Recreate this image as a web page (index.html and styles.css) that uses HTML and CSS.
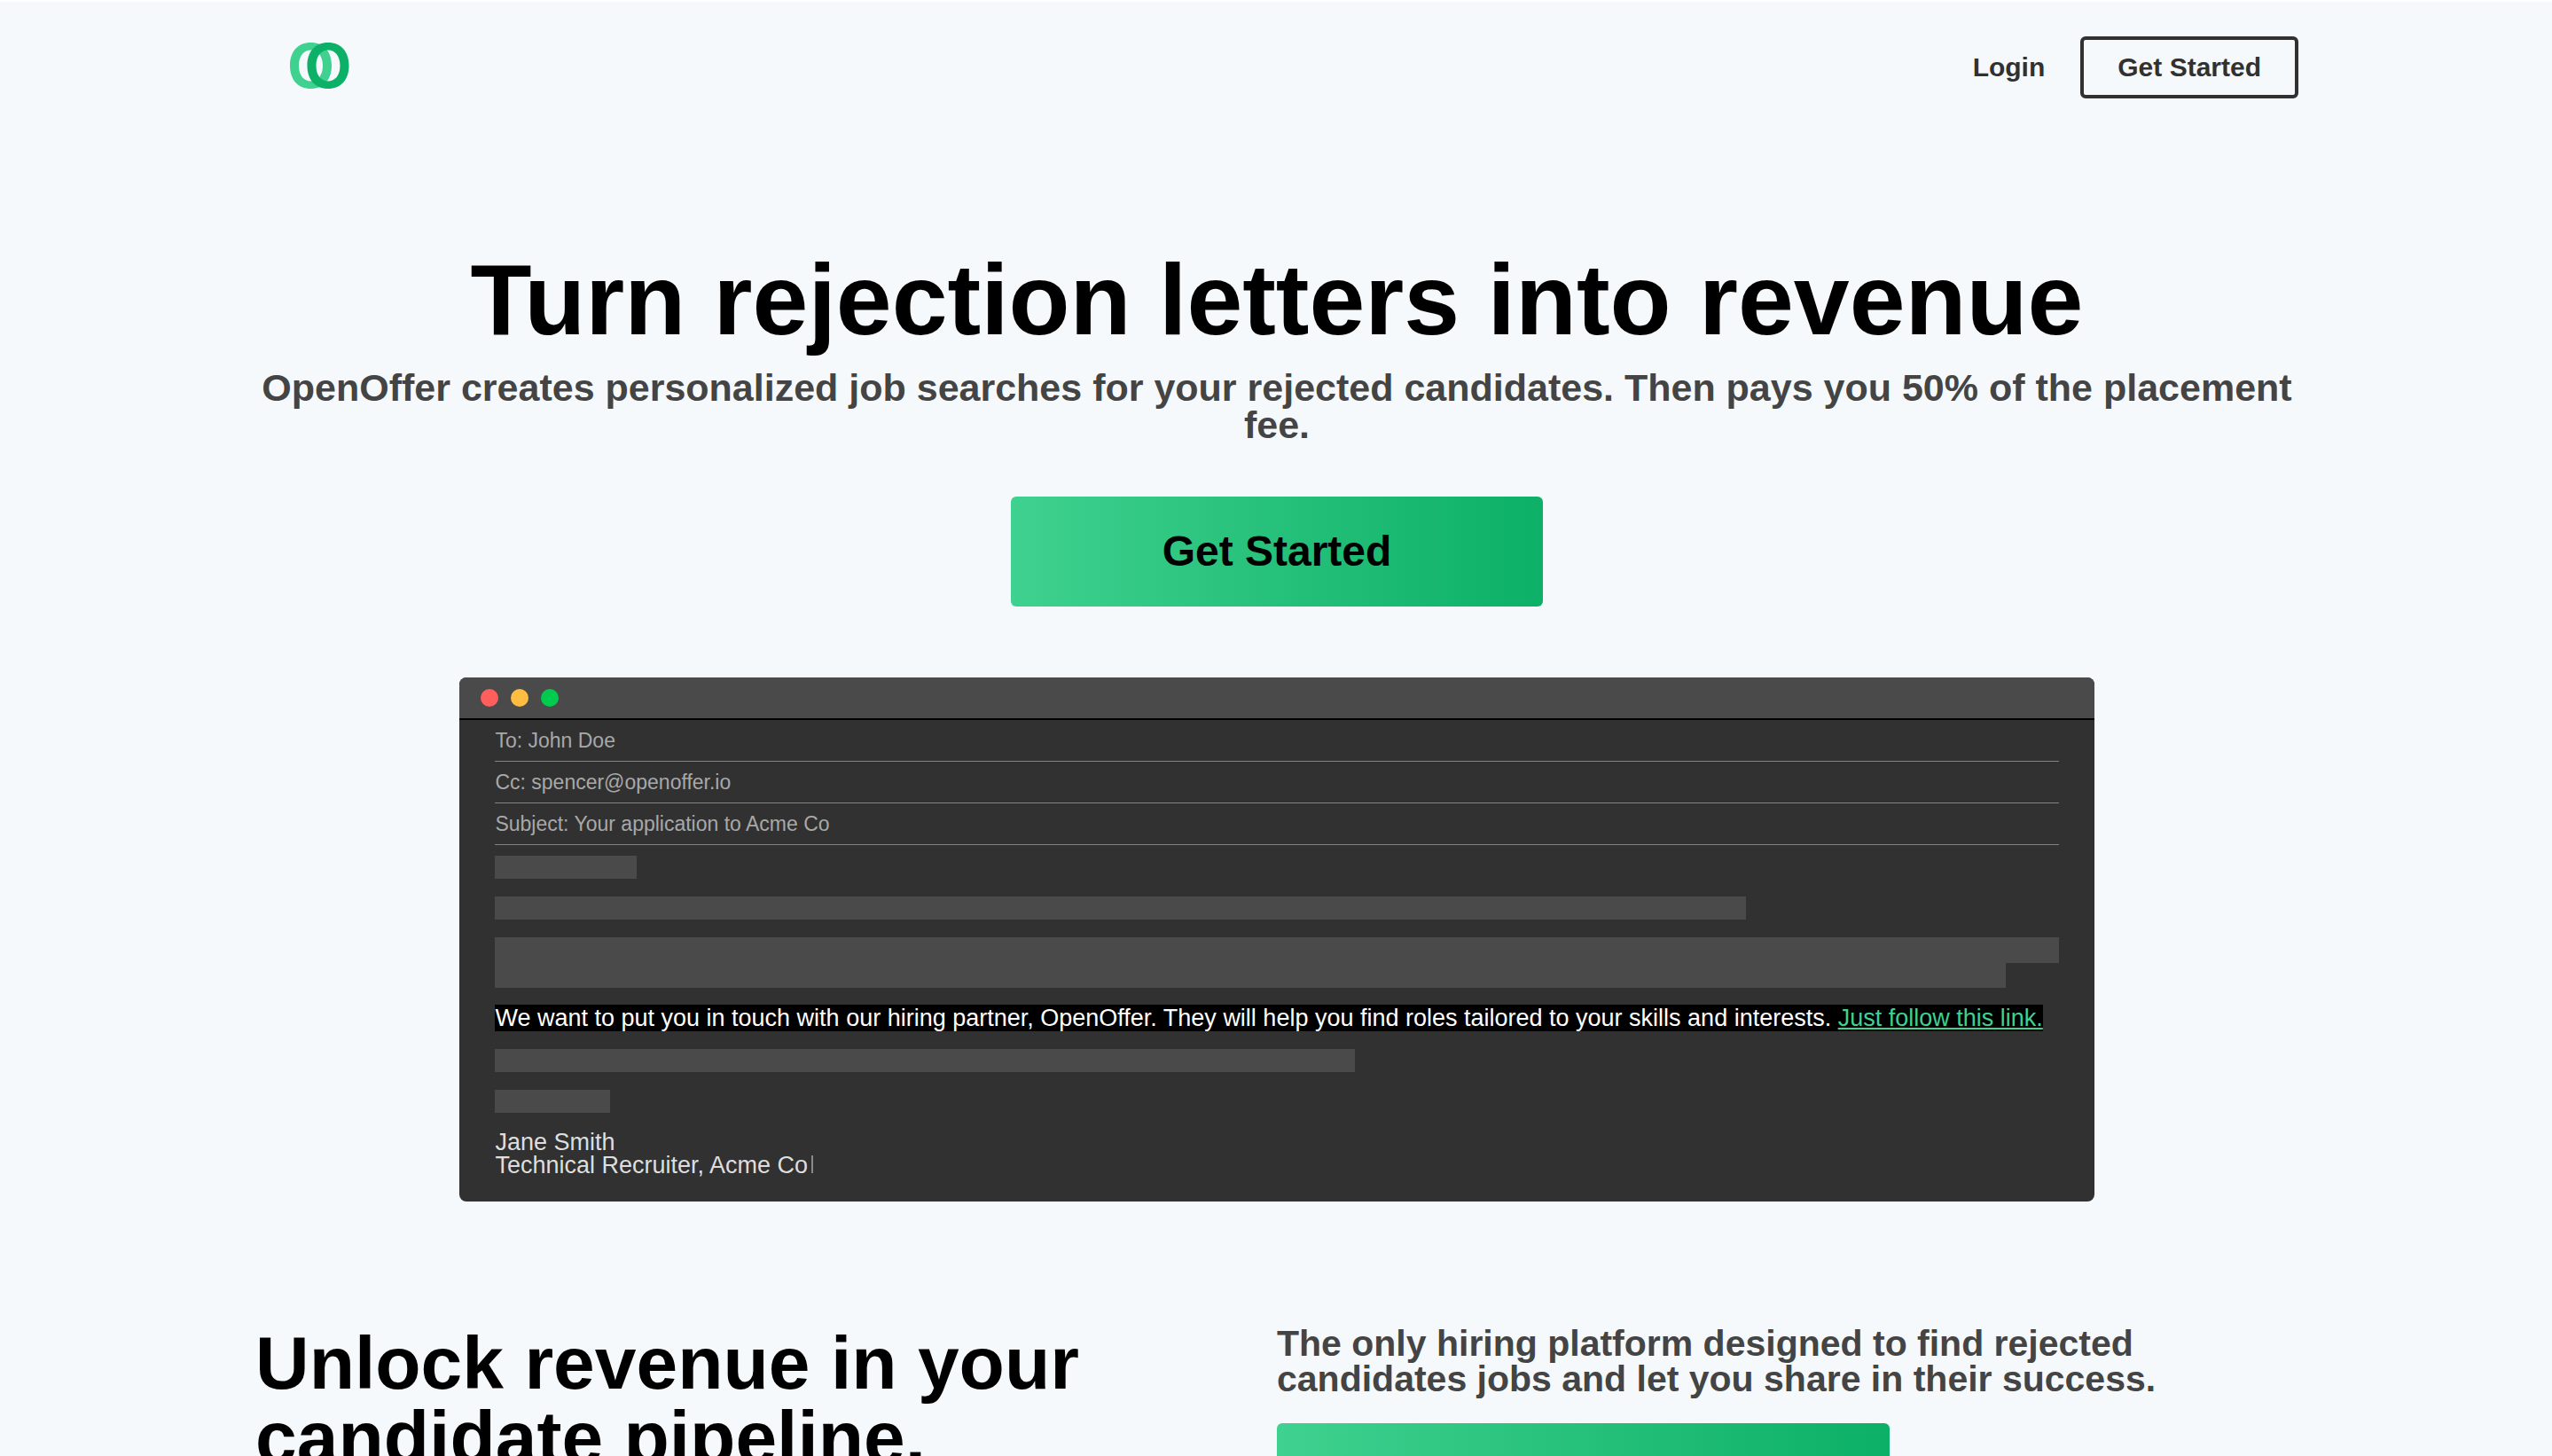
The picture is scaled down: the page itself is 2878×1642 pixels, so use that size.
FILE: index.html
```html
<!DOCTYPE html>
<html lang="en">
<head>
<meta charset="utf-8">
<meta name="viewport" content="width=device-width, initial-scale=1">
<title>OpenOffer</title>
<link rel="stylesheet" href="styles.css">
</head>
<body>
<div class="page">
  <header class="nav">
    <a class="logo" href="#" aria-label="OpenOffer">
      <svg width="67" height="52" viewBox="0 0 67 52" aria-hidden="true">
        <path class="ring-light" fill-rule="evenodd" d="M23.500 0C38 0 47 10 47 26S38 52 23.500 52 0 42 0 26 9 0 23.500 0ZM23.500 8.500C15.500 8.500 10 15 10 26S15.500 43.500 23.500 43.500 37 37 37 26 31.500 8.500 23.500 8.500Z"/>
        <path class="ring-dark" fill-rule="evenodd" d="M43 0C57.500 0 66.500 10 66.500 26S57.500 52 43 52 19.500 42 19.500 26 28.500 0 43 0ZM43 8.500C35 8.500 29.500 15 29.500 26S35 43.500 43 43.500 56.500 37 56.500 26 51 8.500 43 8.500Z"/>
      </svg>
    </a>
    <nav class="nav-links">
      <a class="login" href="#">Login</a>
      <button class="btn-outline" type="button">Get Started</button>
    </nav>
  </header>

  <main>
    <section class="hero">
      <h1>Turn rejection letters into revenue</h1>
      <p class="tagline">OpenOffer creates personalized job searches for your rejected candidates. Then pays you 50% of the placement fee.</p>
      <button class="btn-primary" type="button">Get Started</button>
      <article class="mail">
        <div class="mail-bar">
          <span class="dot dot-red"></span>
          <span class="dot dot-amber"></span>
          <span class="dot dot-green"></span>
        </div>
        <div class="mail-content">
          <p class="field">To: John Doe</p>
          <p class="field">Cc: spencer@openoffer.io</p>
          <p class="field">Subject: Your application to Acme Co</p>
          <div class="mail-body">
            <div class="redacted greeting"></div>
            <div class="redacted intro"></div>
            <div class="paragraph">
              <div class="redacted"></div>
              <div class="redacted last-line"></div>
            </div>
            <p class="pitch"><span class="highlight">We want to put you in touch with our hiring partner, OpenOffer. They will help you find roles tailored to your skills and interests. <a href="#">Just follow this link.</a></span></p>
            <div class="redacted closing"></div>
            <div class="redacted regards"></div>
            <p class="signature">Jane Smith<br>Technical Recruiter, Acme Co<span class="caret"></span></p>
          </div>
        </div>
      </article>
    </section>

    <section class="pitch-row">
      <h2>Unlock revenue in your candidate pipeline.</h2>
      <div class="pitch-side">
        <p class="pitch-text">The only hiring platform designed to find rejected candidates jobs and let you share in their success.</p>
        <button class="btn-primary btn-side" type="button" aria-label="Get Started"></button>
      </div>
    </section>
  </main>
</div>
</body>
</html>
```
FILE: styles.css
```css
* {
  box-sizing: border-box;
}

html {
  overflow-x: hidden;
  background: #f5f9fc;
}

body {
  margin: 0 -2px 0 0;
  border-top: 2px solid #fff;
  font-family: "Liberation Sans", Arial, Helvetica, sans-serif;
  line-height: 1;
  color: #000;
}

h1, h2, p {
  margin: 0;
}

button {
  font: inherit;
  font-weight: 700;
  cursor: pointer;
}

.page {
  padding: 0 10%;
}

/* Header */

.nav {
  display: flex;
  justify-content: space-between;
  align-items: flex-start;
  padding-top: 39px;
}

.logo {
  display: flex;
  margin: 7px 0 0 39px;
}

.ring-light {
  fill: #3fd18f;
}

.ring-dark {
  fill: #0cb066;
}

.nav-links {
  display: flex;
  align-items: center;
  gap: 40px;
}

.login,
.btn-outline {
  font-size: 30px;
  font-weight: 700;
  color: #313131;
  text-decoration: none;
}

.btn-outline {
  height: 70px;
  padding: 0 38px;
  border: 4px solid #313131;
  border-radius: 6px;
  background: transparent;
}

/* Hero */

.hero {
  display: flex;
  flex-direction: column;
  align-items: center;
  padding-top: 171px;
}

h1 {
  font-size: 113px;
  line-height: 112px;
}

.tagline {
  margin-top: 22px;
  font-size: 43px;
  line-height: 42px;
  font-weight: 700;
  color: #444;
  text-align: center;
}

.btn-primary {
  width: 600px;
  height: 124px;
  margin-top: 60px;
  border: 0;
  border-radius: 6px;
  background: linear-gradient(to right, #3fd18f, #0cb066);
  font-size: 48px;
  color: #000;
}

/* Mail window */

.mail {
  width: 80%;
  margin-top: 80px;
  border-radius: 8px;
  overflow: hidden;
  background: #313131;
}

.mail-bar {
  display: flex;
  align-items: center;
  gap: 14px;
  height: 48px;
  padding-left: 24px;
  border-bottom: 2px solid #000;
  background: #4a4a4a;
}

.dot {
  width: 20px;
  height: 20px;
  border-radius: 50%;
}

.dot-red {
  background: #ff5f5c;
}

.dot-amber {
  background: #ffbe42;
}

.dot-green {
  background: #00cb4e;
}

.mail-content {
  padding: 0 40px 28px;
}

.field {
  padding: 12px 0;
  border-bottom: 1px solid #838383;
  font-size: 23px;
  line-height: 22px;
  color: #a8a8a8;
}

.mail-body {
  display: flex;
  flex-direction: column;
  gap: 20px;
  padding-top: 12px;
  font-size: 27px;
  line-height: 26px;
}

.redacted {
  height: 26px;
  background: #4a4a4a;
}

.paragraph .redacted {
  height: 29px;
}

.greeting {
  width: 160px;
}

.intro {
  width: 80%;
}

.paragraph .last-line {
  width: calc(100% - 60px);
  height: 28px;
}

.pitch {
  line-height: 29px;
  color: #fff;
}

.highlight {
  background: #000;
}

.highlight a {
  color: #3fd18f;
}

.closing {
  width: 55%;
}

.regards {
  width: 130px;
}

.signature {
  color: #dedede;
}

.caret {
  display: inline-block;
  width: 2px;
  height: 20px;
  margin-left: 4px;
  background: #8a8a8a;
}

/* Pipeline section */

.pitch-row {
  display: grid;
  grid-template-columns: 1fr 1fr;
  padding-top: 140px;
}

h2 {
  font-size: 84px;
}

.pitch-text {
  font-size: 41px;
  line-height: 40px;
  font-weight: 700;
  color: #444;
}

.btn-side {
  width: 60%;
  margin-top: 30px;
}
```
